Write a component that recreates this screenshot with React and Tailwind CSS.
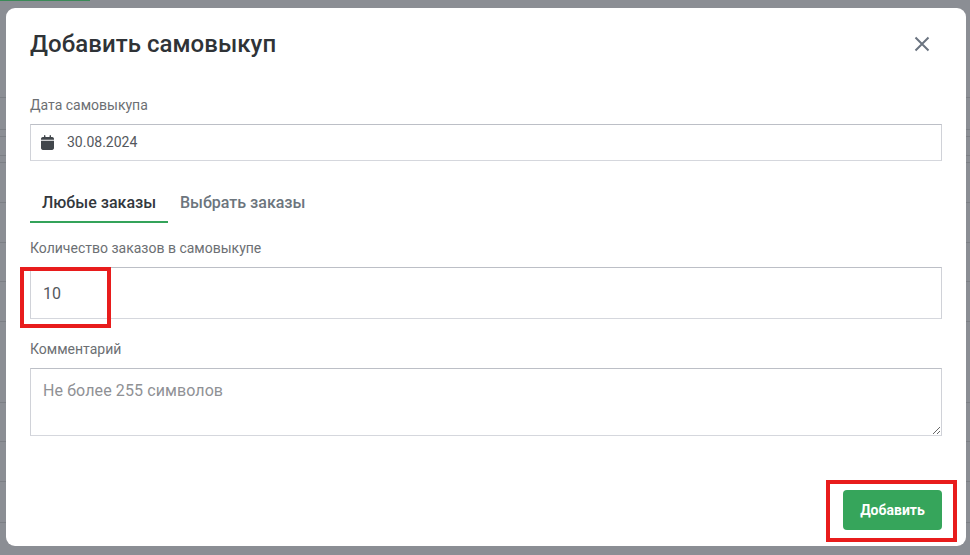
import React from "react";

function Backdrop() {
  const gaps = ["h-[97px]","h-[32px]","h-[7px]","h-[19px]","h-[7px]","h-[40px]","h-[40px]","h-[39px]","h-[40px]","h-[81px]","h-[39px]","h-[40px]","h-[41px]"];
  return (
    <div className="absolute inset-0 bg-[#8b8e94] overflow-hidden">
      <div className="h-px w-[90px] bg-[#3a8a57]" />
      {gaps.map((g, i) => (
        <div key={i} className={`${g} border-b border-[#7c7f85]`} />
      ))}
    </div>
  );
}

export default function App() {
  return (
    <div className="relative w-[970px] h-[555px] overflow-hidden font-['Roboto',sans-serif]">
      <Backdrop />
      <div className="absolute left-[6px] top-[8px] w-[960px] h-[538px] bg-white rounded-[9px] flex flex-col">
        <div className="flex items-center justify-between pl-6 pr-[36px] h-[72px] shrink-0">
          <h1 className="text-[24px] leading-[29px] font-medium text-[#2f3337] tracking-[0.05px]">Добавить самовыкуп</h1>
          <svg width="16" height="16" viewBox="0 0 16 16" fill="none" stroke="#6b7480" strokeWidth="2">
            <path d="M1.5 1.5 L14.5 14.5 M14.5 1.5 L1.5 14.5" />
          </svg>
        </div>
        <div className="px-6 flex flex-col pt-[17px]">
          <label className="text-[14px] leading-4 text-[#6c6f73]">Дата самовыкупа</label>
          <div className="mt-[11px] h-[37px] border border-t-[#bcbfc6] border-x-[#d0d2d8] border-b-[#d5d7dd] flex items-center pl-[10px]">
            <svg width="13" height="15" viewBox="0 0 448 512" fill="#41464b">
              <path d="M152 64h144V24c0-13 11-24 24-24s24 11 24 24v40h40c35 0 64 29 64 64v32H0v-32c0-35 29-64 64-64h40V24c0-13 11-24 24-24s24 11 24 24zM0 192h448v256c0 35-29 64-64 64H64c-35 0-64-29-64-64z" />
            </svg>
            <span className="ml-[13px] pb-[2px] text-[14px] leading-5 text-[#54585d]">30.08.2024</span>
          </div>
          <div className="mt-[25px] flex text-[16px] font-medium leading-[18px]">
            <div className="w-[138px] h-[37px] border-b-2 border-[#34a35a] pt-[8px] pl-[12px] text-[#33383d]">Любые заказы</div>
            <div className="pl-[12px] pt-[8px] text-[#6c757d]">Выбрать заказы</div>
          </div>
          <label className="mt-[17px] text-[14px] leading-4 text-[#6c6f73]">Количество заказов в самовыкупе</label>
          <div className="mt-[11px] h-[52px] border border-t-[#bcbfc6] border-x-[#d0d2d8] border-b-[#d5d7dd] flex items-center pl-3 pt-[2px] text-[16px] text-[#54585d]">10</div>
          <label className="mt-[22px] text-[14px] leading-4 text-[#6c6f73]">Комментарий</label>
          <textarea
            className="mt-[11px] h-[68px] w-full px-3 pt-[12px] pb-[10px] border border-t-[#bcbfc6] border-x-[#d0d2d8] border-b-[#d5d7dd] text-[16px] leading-5 tracking-[0.1px] outline-none placeholder:text-[#8f9195]"
            placeholder="Не более 255 символов"
          />
        </div>
        <div className="mt-auto flex justify-end px-6 pb-[16px]">
          <button className="w-[99px] h-[40px] bg-[#36a55b] rounded-[4px] text-white text-[14px] font-bold">Добавить</button>
        </div>
      </div>
      <div className="absolute left-[20px] top-[267px] w-[91px] h-[61px] border-[4px] border-[#e81c1c]" />
      <div className="absolute left-[826px] top-[480px] w-[131px] h-[62px] border-[4px] border-[#e81c1c]" />
    </div>
  );
}
